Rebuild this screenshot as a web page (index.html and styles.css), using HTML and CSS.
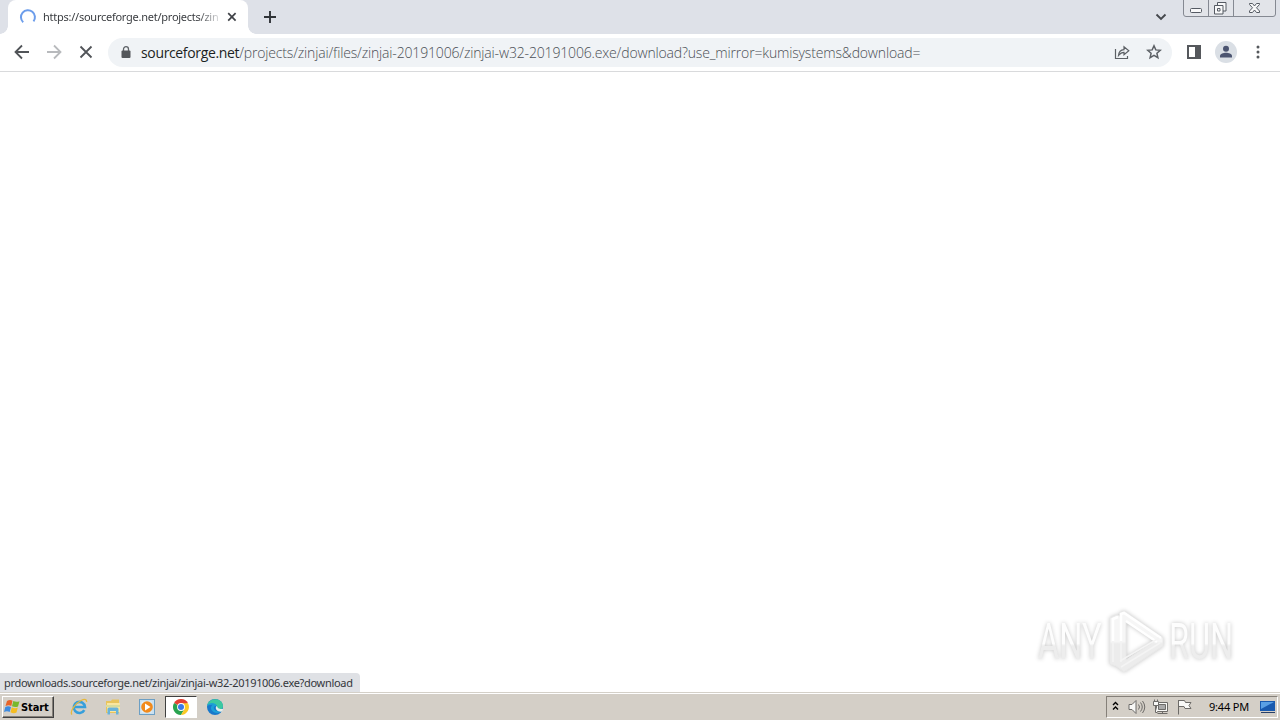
FILE: index.html
```html
<!DOCTYPE html>
<html lang="en">
<head>
<meta charset="utf-8">
<title>Browser</title>
<link rel="stylesheet" href="styles.css">
</head>
<body>
<div class="screen">
  <header class="tabstrip">
    <div class="tab">
      <svg class="spinner" width="18" height="18" viewBox="0 0 18 18"><path d="M4.2 14.3A7 7 0 1 1 14.5 13.4"/></svg>
      <span class="tab-title">https://sourceforge.net/projects/zin</span>
      <svg class="tab-close" width="10" height="10" viewBox="0 0 10 10"><path d="M1.2 1.2l7.4 7.4M8.6 1.2L1.2 8.6"/></svg>
    </div>
    <svg class="new-tab" width="14" height="14" viewBox="0 0 14 14"><path d="M7 1v12M1 7h12"/></svg>
    <svg class="tab-search" width="12" height="8" viewBox="0 0 12 8"><path d="M1.500 1.500L6 6l4.500-4.500"/></svg>
    <svg class="window-controls" width="94" height="18" viewBox="0 0 94 18">
      <path class="frame" d="M.5 0v14q0 2.500 2.500 2.500h87q2.500 0 2.500-2.500V0M25.500 0v16.500M50.500 0v16.500"/>
      <rect class="glyph" x="7.500" y="8.500" width="11" height="4" rx="1"/>
      <path class="glyph" d="M34.500 5.500v-3h8.500v8.500h-3M31.500 5.500h8.500v8.500h-8.500zM34.500 8.500h2.500v2.500h-2.500z"/>
      <path class="glyph" d="M66.500 3.500h3l2 2.500 2-2.500h3v1l-3 3.300 3 3.200v1.500h-3l-2-2.500-2 2.500h-3V11l3-3.200-3-3.300z"/>
    </svg>
  </header>
  <nav class="toolbar">
    <svg class="nav-icon" width="16" height="16" viewBox="0 0 16 16"><path d="M15 8H2M8 1.500L1.500 8 8 14.500"/></svg>
    <svg class="nav-icon disabled" width="16" height="16" viewBox="0 0 16 16"><path d="M1 8h13M8 1.500L14.500 8 8 14.500"/></svg>
    <svg class="nav-icon" width="16" height="16" viewBox="0 0 16 16"><path d="M2.500 2.500l11 11M13.500 2.500l-11 11"/></svg>
    <div class="omnibox">
      <svg class="lock" width="10" height="13" viewBox="0 0 10 13"><path d="M2.500 5V3.200a2.500 2.500 0 0 1 5 0V5" fill="none" stroke="#5f6368" stroke-width="1.300"/><rect x=".5" y="4.500" width="9" height="7.500" rx="1" fill="#54575b"/></svg>
      <div class="url"><span class="host">sourceforge.net</span><span class="path">/projects/zinjai/files/zinjai-20191006/zinjai-w32-20191006.exe/download?use_mirror=kumisystems&amp;download=</span></div>
      <svg class="share" width="18" height="16" viewBox="0 0 18 16"><path d="M2.500 5v9.500h12V12M5.500 11.500c.3-3.700 2-5.700 5.500-5.900V2.700l4.800 4-4.800 4V8.300C8.500 8.300 7 9.500 5.500 11.500z"/></svg>
      <svg class="star" width="16" height="16" viewBox="0 0 16 16"><path d="M8 1.800l1.800 4.100 4.500.4-3.400 3 1 4.400L8 11.400l-3.900 2.300 1-4.400-3.400-3 4.500-.4z"/></svg>
    </div>
    <svg class="panel" width="14" height="14" viewBox="0 0 14 14"><path d="M0 0h14v14H0zM2 2v10h6V2z" fill="#55585c" fill-rule="evenodd"/></svg>
    <svg class="avatar" width="22" height="22" viewBox="0 0 22 22"><circle cx="11" cy="11" r="11" fill="#dadfe5"/><circle cx="11" cy="7.800" r="3" fill="#4b5470"/><path d="M5 16.500V15c0-2 3.500-3.200 6-3.200s6 1.200 6 3.200v1.500z" fill="#4b5470"/></svg>
    <svg class="menu" width="4" height="14" viewBox="0 0 4 14"><circle cx="2" cy="2" r="1.500"/><circle cx="2" cy="7" r="1.500"/><circle cx="2" cy="12" r="1.500"/></svg>
  </nav>
  <main class="page">
    <div class="status">prdownloads.sourceforge.net/zinjai/zinjai-w32-20191006.exe?download</div>
    <div class="watermark">
      <span class="brand">ANY</span>
      <svg class="play" width="60" height="66" viewBox="0 0 60 66">
        <defs><linearGradient id="shade" x1="0" y1="0" x2="0" y2="1"><stop offset=".5" stop-color="#f6f6f6"/><stop offset=".54" stop-color="#ececec"/></linearGradient></defs>
        <path class="shape" d="M11 7L4 10v46l6 2 8 6 39-26v-8L18 3l-4 2v3zM20 14l29 19-29 19z"/>
        <path class="line" d="M7 33V11l5-2M15 33V6l3-1 37 25M20 13l31 21"/>
        <path class="line low" d="M7 33v21M15 33v21M14 53l39-23M15 59l39-24"/>
      </svg>
      <span class="brand run">RUN</span>
    </div>
  </main>
  <footer class="taskbar">
    <div class="start">
      <svg width="17" height="16" viewBox="0 0 17 16"><path d="M3 2q3-2 5.500-.3L7.300 7Q5 5.500 1.500 7z" fill="#e86428"/><path d="M9.300 2q3 1.500 6.200.2L14 7.500Q11 8.700 8 7.200z" fill="#78b82d"/><path d="M1.300 8q3-1.500 5.700.1L5.700 13Q3 11.500 0 13z" fill="#3e8bdf"/><path d="M7.800 8.300q3 1.500 6 .3l-1.300 5Q9.500 15 6.500 13.300z" fill="#f5bd22"/></svg>
      <span>Start</span>
    </div>
    <div class="launchers">
      <div class="launcher"><svg width="18" height="18" viewBox="0 0 18 18"><path d="M14.300 12.200A5.600 5.600 0 1 1 15 9H5" fill="none" stroke="#369fdb" stroke-width="2.600"/><path d="M2 16.500C-.5 14 5 5.500 11 2.500c4-2 6-1 5.500 1.500" fill="none" stroke="#e6b83c" stroke-width="1.300"/></svg></div>
      <div class="launcher"><svg width="18" height="18" viewBox="0 0 18 18"><path d="M2 3h5l1-1.500h7V15H2z" fill="#e8c45c"/><path d="M3 5h13v9H3z" fill="#f9e6a0"/><path d="M2 7h14v2H2z" fill="#d8dc9c"/><path d="M3.500 16.500V11q0-1.500 1.500-1.500h8q1.500 0 1.500 1.500v5.500H12V13H6v3.500z" fill="#68b3da"/></svg></div>
      <div class="launcher"><svg width="18" height="18" viewBox="0 0 18 18"><rect x="1.500" y="1.500" width="15" height="15" fill="#c9e0f0" stroke="#6c9fc4"/><rect x="3.500" y="3.500" width="10" height="11" fill="#fff" opacity=".5"/><circle cx="9" cy="9" r="5.800" fill="#f18a1c"/><path d="M7 5.500v7L12.500 9z" fill="#fff"/></svg></div>
      <div class="launcher active"><svg width="16" height="16" viewBox="0 0 16 16"><path d="M8 8L1.070 4A8 8 0 0 1 14.930 4z" fill="#e34133"/><path d="M8 8L1.070 4A8 8 0 0 0 8 16l3.500-6z" fill="#29a350"/><path d="M8 4.200h7A8 8 0 0 1 8 16l3.500-6z" fill="#fbc926"/><circle cx="8" cy="8" r="3.900" fill="#fff"/><circle cx="8" cy="8" r="3" fill="#3979e7"/></svg></div>
      <div class="launcher"><svg width="18" height="18" viewBox="0 0 18 18"><circle cx="9" cy="9" r="8" fill="#1878cb"/><path d="M1.200 7.500C2 2.500 7 .2 11.500 1.500c4 1.200 6 4.500 5.400 7.500-.4 2-2.400 3-4.900 2.500-1.500-.3-2-1-1.200-2C12 7 8 4.800 1.200 7.500z" fill="#3cc9a0"/><path d="M1.200 7.500C4 3.500 10.500 5 11 8.500c-.7-1-3-.8-3.200 1-.2 2.500 3.500 5 7.800 3.500C13 16 8 15.500 5.500 12 4 9.500 6 7 7 6.500z" fill="#1c9fd8"/><path d="M10.200 8.300c2-.2 0 3.200 7 2.700l-1 2.500c-4 .8-7.700-2-6-5.200z" fill="#e7eeeb"/></svg></div>
    </div>
    <div class="tray">
      <svg class="chevrons" width="7" height="10" viewBox="0 0 7 10"><path d="M1 4l2.500-2.500L6 4M1 8.500L3.500 6 6 8.500"/></svg>
      <svg class="tray-icon" width="18" height="16" viewBox="0 0 18 16"><path class="fill" d="M1 5.500h3l4-4v13l-4-4H1z"/><path d="M10.500 5.500q2 2.500 0 5M12.500 3.500q3.500 4.500 0 9M14.500 2q4.500 6 0 12"/></svg>
      <svg class="tray-icon network" width="17" height="16" viewBox="0 0 17 16"><path class="fill" d="M4.500 3.500h11v9h-11zM5.500 14.500h10M10.500 12.500v2"/><path d="M6.500 5.500h7v5h-7z" class="monitor"/><path class="fill" d="M1.500 2.500h5v4h-5zM2.500.5v2M5.500.5v2M3.500 6.500v7h2"/></svg>
      <svg class="tray-icon flag" width="17" height="16" viewBox="0 0 17 16"><path class="fill" d="M2.500 1.500h6l1 2h5.500l-2 3 2 3H9l-1-2H2.500z"/><path d="M2.500 1v14.500"/></svg>
      <span class="clock">9:44 PM</span>
      <svg class="desktop" width="16" height="14" viewBox="0 0 16 14"><path d="M1 1h15v10H1z" fill="#195aaf"/><path d="M2 2h13L2 9z" fill="#5aa0e5"/><path d="M2 12h14v1H2z" fill="#273f68"/></svg>
    </div>
  </footer>
</div>
</body>
</html>
```
FILE: styles.css
```css
* { box-sizing: border-box; }
body { margin: 0; overflow: hidden; background: #fff; font-family: "Noto Sans", "Open Sans", sans-serif; }
svg { display: block; flex: none; }
.screen { width: 1280px; height: 720px; display: flex; flex-direction: column; }

.tabstrip { height: 34px; flex: none; display: flex; align-items: flex-start; padding-left: 8px; background: #dee1e8; }
.tab { position: relative; width: 240px; height: 34px; display: flex; align-items: center; padding-left: 11px; background: #fff; border-radius: 8px 8px 0 0; }
.tab::before, .tab::after { content: ""; position: absolute; bottom: 0; width: 8px; height: 8px; }
.tab::before { left: -8px; background: radial-gradient(circle at 0 0, transparent 7.500px, #fff 8px); }
.tab::after { right: -8px; background: radial-gradient(circle at 100% 0, transparent 7.500px, #fff 8px); }
.spinner path { fill: none; stroke: #6c9deb; stroke-width: 2; }
.tab-title { width: 176px; margin-left: 6px; white-space: nowrap; font-size: 11px; line-height: 20px; letter-spacing: -.25px; color: transparent; background: linear-gradient(90deg, #34373b 155px, #dcdddf 176px); -webkit-background-clip: text; background-clip: text; }
.tab-close { margin-left: 8px; }
.tab-close path { fill: none; stroke: #3f4247; stroke-width: 1.700; }
.new-tab { margin: 10px 0 0 15px; }
.new-tab path { fill: none; stroke: #303338; stroke-width: 1.900; }
.tab-search { margin: 13px 16px 0 auto; }
.tab-search path { fill: none; stroke: #45484d; stroke-width: 1.900; }
.window-controls { margin-right: 3px; }
.frame { fill: #e2e4e9; stroke: #858992; }
.glyph { fill: #f8f8f9; stroke: #555a63; }

.toolbar { height: 38px; flex: none; display: flex; align-items: center; padding: 0 20px 1px 14px; border-bottom: 1px solid #d9dadc; background: #fff; }
.nav-icon { margin-right: 16px; }
.nav-icon path { fill: none; stroke: #515458; stroke-width: 1.800; }
.nav-icon.disabled path { stroke: #b8babd; }
.nav-icon:nth-child(3) { margin-right: 14px; }
.omnibox { width: 1064px; height: 29px; display: flex; align-items: center; padding: 0 10px 0 13px; border-radius: 15px; background: #f0f3f6; }
.url { flex: 1; margin-left: 10px; padding-top: 2px; white-space: nowrap; font-family: "Open Sans", "Noto Sans", sans-serif; font-size: 14px; font-weight: 300; line-height: 24px; letter-spacing: -.16px; }
.host { color: #1c1f23; font-weight: 400; letter-spacing: -.35px; }
.path { color: #4b4f55; }
.share { margin-right: 15px; margin-left: -1px; }
.share path, .star path { fill: none; stroke: #5c6065; stroke-width: 1.200; }
.star path { stroke-width: 1.500; }
.panel { margin-left: 15px; }
.avatar { margin-left: 14px; }
.menu { margin-left: 19px; fill: #55585c; }

.page { flex: 1; display: flex; align-items: flex-end; justify-content: space-between; background: #fff; }
.status { width: 360px; height: 19px; padding-left: 4px; border-radius: 0 4px 0 0; background: #dfe1e5; color: #34373b; font-size: 11px; line-height: 20px; letter-spacing: -.31px; white-space: nowrap; }
.watermark { height: 66px; margin: 0 44px 18px 0; display: flex; align-items: center; filter: drop-shadow(0 0 2px #c4c4c4); }
.brand { width: 102px; margin-right: -35px; padding-top: 2px; color: transparent; background: linear-gradient(#fdfdfd 54%, #ededed 58%); -webkit-background-clip: text; background-clip: text; font-family: Roboto, sans-serif; font-size: 50px; line-height: 60px; font-weight: 400; transform: scaleX(.65); transform-origin: 0 50%; white-space: nowrap; }
.run { margin-left: 3px; }
.play { margin-left: 1px; }
.shape { fill: url(#shade); fill-rule: evenodd; stroke: #e9e9e9; stroke-width: 1; stroke-linejoin: round; }
.line { fill: none; stroke: #fff; stroke-width: 2.500; }
.low { stroke: #f4f4f4; stroke-width: 1.500; }

.taskbar { height: 28px; flex: none; display: flex; align-items: center; padding: 0 2px; border-top: 1px solid #d4d0c8; background: #d4cfc7; box-shadow: inset 0 1px #fff; }
.start { width: 52px; height: 22px; display: flex; align-items: center; padding-left: 1px; border: 1px solid; border-color: #fff #404040 #404040 #fff; box-shadow: inset -1px -1px #858079; font-family: "DejaVu Sans Condensed", "DejaVu Sans", sans-serif; font-size: 11px; font-weight: 700; letter-spacing: -.1px; color: #000; }
.start span { padding-top: 1px; }
.launchers { display: flex; margin-left: 8px; }
.launcher { width: 32px; height: 22px; margin: 0 1px; display: flex; align-items: center; justify-content: center; }
.active { background: #fff; border: 1px solid; border-color: #404040 #fff #fff #404040; }
.tray { width: 172px; height: 22px; margin-left: auto; display: flex; align-items: center; padding: 0 2px 0 5px; border: 1px solid; border-color: #858079 #fff #fff #858079; }
.chevrons { margin-bottom: 2px; }
.chevrons path { fill: none; stroke: #000; stroke-width: 1.400; }
.tray-icon { margin-left: 9px; }
.network { margin-left: 6px; }
.flag { margin-left: 7px; }
.tray-icon path { fill: none; stroke: #6d6b68; }
.tray-icon .fill { fill: #f8f8f6; }
.tray-icon .monitor { fill: #aaa; }
.clock { width: 41px; margin: 0 9px 0 auto; font-size: 11px; line-height: 20px; letter-spacing: -.2px; white-space: nowrap; color: #000; }
```
